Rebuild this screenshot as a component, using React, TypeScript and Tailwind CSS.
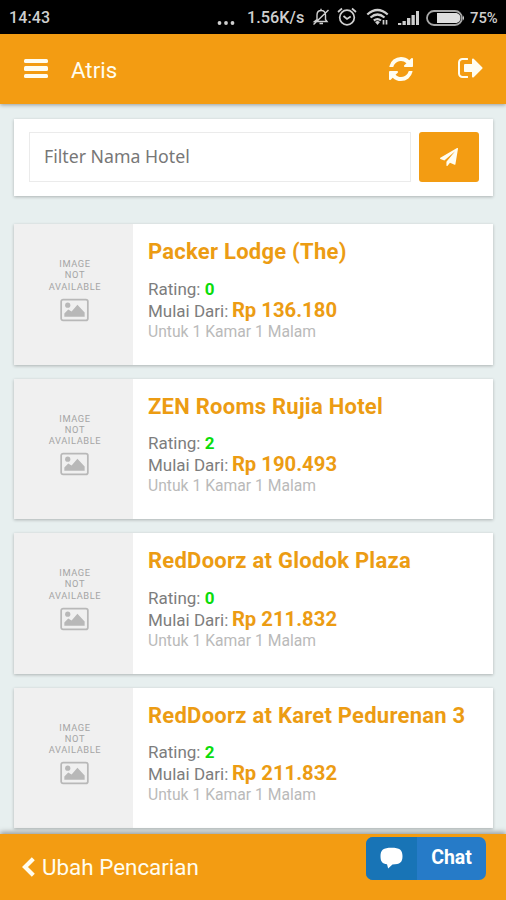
import React from "react";

const hotels = [
  { name: "Packer Lodge (The)", rating: 0, price: "Rp 136.180" },
  { name: "ZEN Rooms Rujia Hotel", rating: 2, price: "Rp 190.493" },
  { name: "RedDoorz at Glodok Plaza", rating: 0, price: "Rp 211.832" },
  { name: "RedDoorz at Karet Pedurenan 3", rating: 2, price: "Rp 211.832" },
];

function Glyph({ d, className }: { d: string; className: string }) {
  return (
    <svg viewBox="0 0 1792 1792" fill="currentColor" className={className}>
      <path d={d} />
    </svg>
  );
}

const REFRESH =
  "M1639 1056q0 5-1 7-64 268-268 434.500t-478 166.500q-146 0-282.500-55t-243.500-157l-129 129q-19 19-45 19t-45-19-19-45v-448q0-26 19-45t45-19h448q26 0 45 19t19 45-19 45l-137 137q71 66 161 102t187 36q134 0 250-65t186-179q11-17 53-117 8-23 30-23h192q13 0 22.500 9.500t9.500 22.500zm25-800v448q0 26-19 45t-45 19h-448q-26 0-45-19t-19-45 19-45l138-138q-148-137-349-137-134 0-250 65t-186 179q-11 17-53 117-8 23-30 23h-199q-13 0-22.500-9.500t-9.500-22.500v-7q65-268 270-434.500t480-166.500q146 0 284 55.500t245 156.500l130-129q19-19 45-19t45 19 19 45z";
const SIGN_OUT =
  "M704 1440q0 4 1 20t.5 26.500-3 23.500-10 19.500-20.500 6.500h-320q-119 0-203.500-84.500t-84.500-203.500v-704q0-119 84.500-203.500t203.500-84.500h320q13 0 22.500 9.500t9.500 22.500q0 4 1 20t.5 26.500-3 23.500-10 19.500-20.500 6.500h-320q-66 0-113 47t-47 113v704q0 66 47 113t113 47h312l11.500 1 11.500 3 8 5.500 7 9 2 13.500zm928-544q0 26-19 45l-544 544q-19 19-45 19t-45-19-19-45v-288h-448q-26 0-45-19t-19-45v-384q0-26 19-45t45-19h448v-288q0-26 19-45t45-19 45 19l544 544q19 19 19 45z";
const PLANE =
  "M1764 11q33 24 27 64l-256 1536q-5 29-32 45-14 8-31 8-11 0-24-5l-453-185-242 295q-18 23-49 23-13 0-22-4-19-7-30.500-23.500t-11.500-36.500v-349l864-1059-1069 925-395-162q-37-14-40-55-2-40 32-59l1664-960q15-9 32-9 20 0 36 11z";

function StatusBar() {
  return (
    <div className="flex h-[34px] shrink-0 items-center bg-black pl-[9px] pr-[8px] text-[#cfcfcf]">
      <span className="w-[60px] pt-[2px] text-[16px] leading-[34px] font-medium tracking-[0.1px]">14:43</span>
      <svg viewBox="0 0 18 4" className="ml-auto mt-[11px] h-[4px] w-[18px]" fill="currentColor">
        <circle cx="2.500" cy="2" r="1.900" />
        <circle cx="9" cy="2" r="1.900" />
        <circle cx="15.500" cy="2" r="1.900" />
      </svg>
      <span className="ml-[12px] w-[59px] whitespace-nowrap pt-[2px] text-[16.300px] leading-[34px] font-medium">1.56K/s</span>
      <svg viewBox="0 0 18 18" className="ml-[6px] h-[18px] w-[18px]" fill="none" stroke="currentColor" strokeWidth="1.400">
        <path d="M2.500 13.500h12.500l-1.500-2V7c0-3-2-4.500-4.300-4.500S5 4 5 7v4.500zM9 .8v1.700M7.500 15.500h3.500M1.500 16.500l15-14.500" />
      </svg>
      <svg viewBox="0 0 20 20" className="ml-[7px] h-[20px] w-[20px]" fill="none" stroke="currentColor" strokeWidth="1.700">
        <circle cx="10" cy="10.500" r="7.300" />
        <path d="M1 5 5 1.500M19 5 15 1.500M6.500 9 10 12l3.700-2.500" />
      </svg>
      <svg viewBox="0 0 24 18" className="ml-[9px] h-[18px] w-[24px]" fill="none" stroke="currentColor" strokeWidth="2.200">
        <path d="M1.300 6.500Q11.500-2.500 21.700 6.500M4.500 9.500Q11.500 3.500 18.500 9.500M7.800 12.500Q11.500 9.800 15 12.500" />
        <path d="m9 14 2.500 3 2.500-3-2.500-1.200z" fill="currentColor" stroke="none" />
        <path d="M17.500 12v4.500M20.500 12v4.500" strokeWidth="1.700" />
      </svg>
      <svg viewBox="0 0 22 16" className="ml-[8px] mt-[2px] h-[16px] w-[22px]" fill="currentColor">
        <path d="M0 13h3.300v2H0zM4.500 11h3.300v4H4.500zM9 8h3.300v7H9zM13.500 5h3.300v10h-3.300zM18 1h3v14h-3z" />
      </svg>
      <svg viewBox="0 0 39 16" className="ml-[6px] mt-[1px] h-[16px] w-[39px]">
        <rect x="1" y="1" width="35" height="14" rx="7" fill="none" stroke="#a8a8a8" strokeWidth="1.800" />
        <path d="M11 3h19.500q4 1 4 5t-4 5H11zM37 5.500q2 2.500 0 5z" fill="#dedede" />
      </svg>
      <span className="ml-[5px] w-[28px] whitespace-nowrap pt-[2px] text-[14.800px] leading-[34px] font-medium">75%</span>
    </div>
  );
}

function HotelCard({ name, rating, price }: { name: string; rating: number; price: string }) {
  return (
    <article className="flex h-[140.500px] shrink-0 bg-white shadow-[0_1px_3px_rgba(0,0,0,0.25)]">
      <div className="flex w-[119px] flex-col items-center bg-[#f0f0f0] pt-[34px] text-[#a5a5a5]">
        <div className="pl-[3px] text-center text-[9.300px] leading-[11.300px] tracking-[0.600px]">
          IMAGE
          <br />
          NOT
          <br />
          AVAILABLE
        </div>
        <svg viewBox="0 0 30 24" className="ml-[2px] mt-[6px] h-[24px] w-[29px]">
          <rect x="1.200" y="1.200" width="27.600" height="21.600" rx="2" fill="none" stroke="#b8b8b8" strokeWidth="1.800" />
          <circle cx="8" cy="7" r="2.700" fill="#b8b8b8" />
          <path d="M4.500 19v-3.500l4-4 3.500 2 6-7 7.500 8V19z" fill="#b8b8b8" />
        </svg>
      </div>
      <div className="min-w-0 flex-1 whitespace-nowrap pl-[15px] pt-[13px]">
        <h2 className="text-[22px] leading-[29px] font-bold tracking-[0.250px] text-[#ec9c13]">{name}</h2>
        <p className="mt-[11.500px] text-[17px] leading-[22px] text-[#7d7d7d]">
          Rating: <b className="font-bold text-[#0bdc0b]">{rating}</b>
        </p>
        <p className="flex h-[22px] items-baseline gap-[3.500px] text-[17px] leading-[21px] text-[#7d7d7d]">
          <span>Mulai Dari:</span>
          <span className="text-[20.300px] font-bold text-[#ec9c13]">{price}</span>
        </p>
        <p className="text-[15.700px] leading-[19px] text-[#bababa]">Untuk 1 Kamar 1 Malam</p>
      </div>
    </article>
  );
}

export default function App() {
  return (
    <div className="flex h-[900px] w-[506px] flex-col overflow-hidden bg-[#e7efef] font-['Roboto',sans-serif]">
      <StatusBar />
      <header className="z-10 flex h-[70px] shrink-0 items-center bg-[#f39c12] pl-[24px] pr-[21px] text-[#fffdf0] shadow-[0_1px_4px_rgba(0,0,0,0.35)]">
        <div className="mt-[-1px] flex w-[24px] flex-col gap-[3px]">
          <i className="h-[4.500px] rounded-[1.500px] bg-current" />
          <i className="h-[4.500px] rounded-[1.500px] bg-current" />
          <i className="h-[4.500px] rounded-[1.500px] bg-current" />
        </div>
        <h1 className="ml-[23px] pt-[3px] text-[22.300px]">Atris</h1>
        <Glyph d={REFRESH} className="ml-auto h-[28px] w-[28px]" />
        <Glyph d={SIGN_OUT} className="ml-[42px] mt-[-2px] h-[28px] w-[28px]" />
      </header>

      <main className="flex min-h-0 flex-1 flex-col overflow-hidden px-[14px] pr-[13px] pt-[15px]">
        <section className="flex h-[77px] shrink-0 gap-[8px] bg-white px-[15px] pr-[14px] pt-[13px] shadow-[0_1px_3px_rgba(0,0,0,0.25)]">
          <input
            placeholder="Filter Nama Hotel"
            className="h-[50px] min-w-0 flex-1 border border-[#ebebeb] px-[14px] pb-[3px] font-['Noto_Sans',sans-serif] text-[17.700px] placeholder:text-[#777]"
          />
          <button className="flex h-[50px] w-[60px] items-center justify-center rounded-[3px] bg-[#f39c12] text-[#fffdf0]">
            <Glyph d={PLANE} className="h-[18px] w-[18px]" />
          </button>
        </section>
        <div className="mt-[28px] flex flex-col gap-[14px]">
          {hotels.map((h) => (
            <HotelCard key={h.name} {...h} />
          ))}
        </div>
      </main>

      <footer className="z-10 flex h-[66px] shrink-0 bg-[#f39c12] pl-[22px] pr-[20px] text-[#fffdf0] shadow-[0_-2px_5px_rgba(0,0,0,0.35)]">
        <a className="flex items-center gap-[7px] text-[22.400px]">
          <svg viewBox="0 0 13 20" className="mt-[-1px] h-[20px] w-[13px]" fill="none" stroke="currentColor" strokeWidth="4.200">
            <path d="M11.300 1.700 3 10l8.300 8.300" />
          </svg>
          <span className="pt-[2px]">Ubah Pencarian</span>
        </a>
        <button className="ml-auto mt-[3px] flex h-[43px] w-[120px] overflow-hidden rounded-[7px] bg-[#267bc8] text-white">
          <span className="flex h-full w-[51px] items-center justify-center bg-[#1874b6]">
            <svg viewBox="0 0 24 23" className="mt-[-1px] h-[22px] w-[23px]" fill="currentColor">
              <path d="M12 .8C3.500.8.500 3 .5 9.500c0 6 2 8.200 6.800 8.600L8.500 22.500l4.500-4.300c8 0 10.500-2 10.500-8.700C23.500 3 20.500.8 12 .8z" />
            </svg>
          </span>
          <span className="flex-1 text-center text-[19.500px] leading-[41px] font-bold">Chat</span>
        </button>
      </footer>
    </div>
  );
}
